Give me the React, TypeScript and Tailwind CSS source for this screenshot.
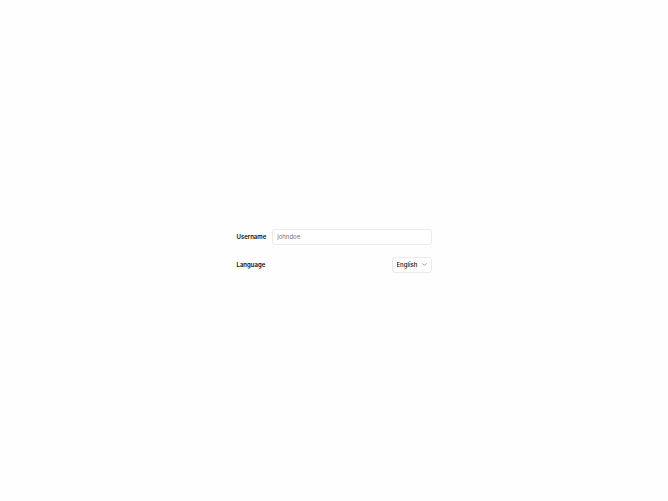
import { useState } from "react";
import { ChevronDown } from "lucide-react";

const languages = ["English", "French", "German", "Spanish"];

export default function App() {
  const [username, setUsername] = useState("");
  const [language, setLanguage] = useState("English");

  return (
    <div className="flex min-h-screen items-center justify-center bg-[#fefefe] font-['Inter',sans-serif] text-[6px] text-neutral-950">
      <form
        className="flex w-full max-w-[195px] flex-col gap-3"
        onSubmit={(e) => e.preventDefault()}
      >
        <div className="flex items-center gap-1.5">
          <label htmlFor="username" className="font-semibold">
            Username
          </label>
          <input
            id="username"
            className="h-4 min-w-0 flex-1 rounded-[3px] border border-[#ebebeb] bg-white px-1 outline-none placeholder:text-neutral-500"
            placeholder="johndoe"
            value={username}
            onChange={(e) => setUsername(e.target.value)}
          />
        </div>

        <div className="flex items-center justify-between">
          <label htmlFor="language" className="font-semibold">
            Language
          </label>
          <div className="relative">
            <select
              id="language"
              className="h-4 w-10 appearance-none rounded-[3px] border border-[#ebebeb] bg-white pl-1 font-medium outline-none"
              value={language}
              onChange={(e) => setLanguage(e.target.value)}
            >
              {languages.map((l) => (
                <option key={l}>{l}</option>
              ))}
            </select>
            <ChevronDown
              size={7}
              className="pointer-events-none absolute top-1 right-1 text-neutral-600"
            />
          </div>
        </div>
      </form>
    </div>
  );
}
